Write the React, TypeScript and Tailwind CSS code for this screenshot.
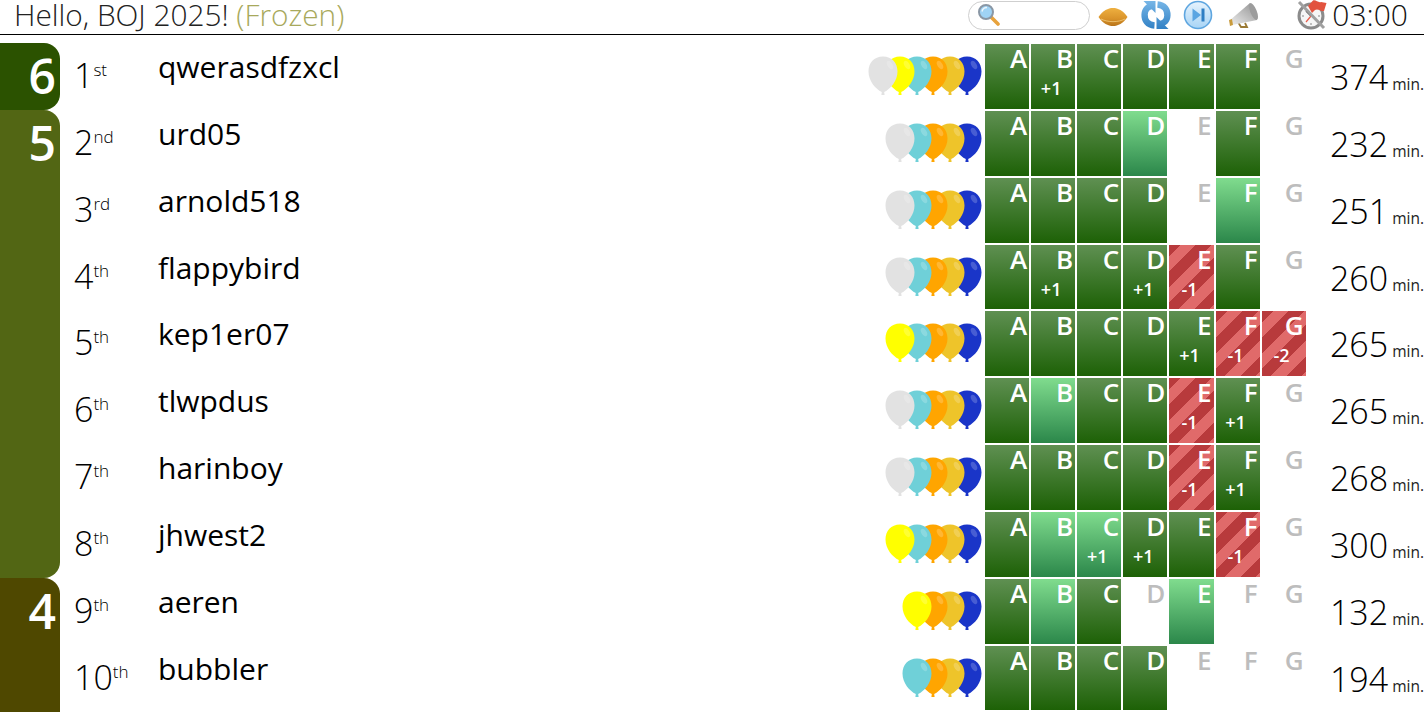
const problems = ["A", "B", "C", "D", "E", "F", "G"];

type Row = {
  rank: number;
  suffix: string;
  name: string;
  balloons: string[];
  cells: string[];
  time: number;
};

// ok / first / no, wrong is "x", delta after the colon
const groups: { solved: number; bg: string; rows: Row[] }[] = [
  {
    solved: 6,
    bg: "bg-[#2b5200]",
    rows: [
      { rank: 1, suffix: "st", name: "qwerasdfzxcl", balloons: ["silver", "yellow", "teal", "orange", "gold", "blue"], cells: ["ok", "ok:+1", "ok", "ok", "ok", "ok", "no"], time: 374 },
    ],
  },
  {
    solved: 5,
    bg: "bg-[#526614]",
    rows: [
      { rank: 2, suffix: "nd", name: "urd05", balloons: ["silver", "teal", "orange", "gold", "blue"], cells: ["ok", "ok", "ok", "first", "no", "ok", "no"], time: 232 },
      { rank: 3, suffix: "rd", name: "arnold518", balloons: ["silver", "teal", "orange", "gold", "blue"], cells: ["ok", "ok", "ok", "ok", "no", "first", "no"], time: 251 },
      { rank: 4, suffix: "th", name: "flappybird", balloons: ["silver", "teal", "orange", "gold", "blue"], cells: ["ok", "ok:+1", "ok", "ok:+1", "x:-1", "ok", "no"], time: 260 },
      { rank: 5, suffix: "th", name: "kep1er07", balloons: ["yellow", "teal", "orange", "gold", "blue"], cells: ["ok", "ok", "ok", "ok", "ok:+1", "x:-1", "x:-2"], time: 265 },
      { rank: 6, suffix: "th", name: "tlwpdus", balloons: ["silver", "teal", "orange", "gold", "blue"], cells: ["ok", "first", "ok", "ok", "x:-1", "ok:+1", "no"], time: 265 },
      { rank: 7, suffix: "th", name: "harinboy", balloons: ["silver", "teal", "orange", "gold", "blue"], cells: ["ok", "ok", "ok", "ok", "x:-1", "ok:+1", "no"], time: 268 },
      { rank: 8, suffix: "th", name: "jhwest2", balloons: ["yellow", "teal", "orange", "gold", "blue"], cells: ["ok", "first", "first:+1", "ok:+1", "ok", "x:-1", "no"], time: 300 },
    ],
  },
  {
    solved: 4,
    bg: "bg-[#4f4800]",
    rows: [
      { rank: 9, suffix: "th", name: "aeren", balloons: ["yellow", "orange", "gold", "blue"], cells: ["ok", "first", "ok", "no", "first", "no", "no"], time: 132 },
      { rank: 10, suffix: "th", name: "bubbler", balloons: ["teal", "orange", "gold", "blue"], cells: ["ok", "ok", "ok", "ok", "no", "no", "no"], time: 194 },
    ],
  },
];

const balloonColors: Record<string, string> = {
  silver: "#e2e2e2",
  yellow: "#ffff00",
  teal: "#6fd0d8",
  orange: "#ffa500",
  gold: "#eec42a",
  blue: "#1a35c8",
};

const Balloon = ({ color, z }: { color: string; z: number }) => (
  <svg width="30" height="40" viewBox="0 0 30 40" className="relative -ml-[13.2px] first:ml-0 shrink-0" style={{ zIndex: z }}>
    <path
      d="M15 0.5C24 0.5 29.5 7 29.5 15.5C29.5 25 22.5 33 16.2 36L16.6 39H13.4L13.8 36C7.5 33 0.5 25 0.5 15.5C0.5 7 6 0.5 15 0.5Z"
      fill={balloonColors[color]}
    />
    <ellipse cx="22" cy="9" rx="2.6" ry="4.5" fill="#fff" opacity="0.2" transform="rotate(-30 22 9)" />
  </svg>
);

const Cell = ({ letter, value }: { letter: string; value: string }) => {
  const [status, delta] = value.split(":");
  const bg =
    status === "ok"
      ? "bg-[linear-gradient(#5f9052,#1d6106)]"
      : status === "first"
        ? "bg-[linear-gradient(#80dc8e,#2b874a)]"
        : status === "x"
          ? "bg-[repeating-linear-gradient(135deg,#b83a3c_0,#b83a3c_8px,#e06a6a_8px,#e06a6a_19px,#b83a3c_19px,#b83a3c_22px)]"
          : "";
  return (
    <div className={`w-[44.1px] h-full shrink-0 flex flex-col items-end pr-[2px] ${bg}`}>
      <span className={`text-[26px] leading-none font-semibold mt-[1px] ${status === "no" ? "text-[#bdbdbd]" : "text-white"}`}>
        {letter}
      </span>
      {delta && <span className="self-start w-[40px] text-center mt-[5px] text-[18px] leading-[24px] font-semibold text-white">{delta}</span>}
    </div>
  );
};

const Standing = ({ row }: { row: Row }) => (
  <div className="flex h-[66.85px]">
    <div className="w-[98px] shrink-0 pl-[14px] pt-[6px] text-[34px] leading-[42px] font-light text-black whitespace-nowrap">
      {row.rank}
      <span className="text-[17px] align-[12px]">{row.suffix}</span>
    </div>
    <div className="flex-1 pt-[5px] text-[30px] leading-[38px] text-black">{row.name}</div>
    <div className="flex items-start pt-[13px] mr-[3px]">
      {row.balloons.map((b, i) => (
        <Balloon key={b} color={b} z={row.balloons.length - i} />
      ))}
    </div>
    <div className="flex gap-[2px] py-[1px]">
      {problems.map((p, i) => (
        <Cell key={p} letter={p} value={row.cells[i]} />
      ))}
    </div>
    <div className="w-[118.3px] shrink-0 pt-[13px] text-right text-[34px] leading-[42px] font-light text-black whitespace-nowrap">
      {row.time}
      <span className="text-[15.5px] font-normal text-[#222] ml-[4px]">min.</span>
    </div>
  </div>
);

const Magnifier = () => (
  <svg width="22" height="22" viewBox="0 0 22 22">
    <path d="M13 13L20 20" stroke="#e8a33d" strokeWidth="3.6" strokeLinecap="round" />
    <circle cx="8" cy="8" r="7" fill="#9fd3f5" stroke="#8a97a5" strokeWidth="2" />
    <path d="M4 7.5C4.5 5 6.5 3.5 9 3.5" fill="none" stroke="#fff" strokeWidth="1.4" opacity="0.8" />
  </svg>
);

const Lemon = () => (
  <svg width="30" height="20" viewBox="0 0 30 20" className="mt-[3px]">
    <defs>
      <linearGradient id="lemon" x1="0" y1="0" x2="0" y2="1">
        <stop offset="0" stopColor="#eeb040" />
        <stop offset="0.6" stopColor="#d9932a" />
        <stop offset="1" stopColor="#b8741a" />
      </linearGradient>
    </defs>
    <path d="M0.5 10C5 3.5 10 1 15 1C20 1 25 3.5 29.5 10C25 16.5 20 19 15 19C10 19 5 16.5 0.5 10Z" fill="url(#lemon)" />
    <path d="M3 12C10 15.5 20 15.5 27 12" fill="none" stroke="#f6d48a" strokeWidth="1" opacity="0.7" />
  </svg>
);

const Refresh = () => (
  <svg width="30" height="30" viewBox="0 0 30 30">
    <defs>
      <linearGradient id="refresh" gradientUnits="userSpaceOnUse" x1="0" y1="0" x2="0" y2="30">
        <stop offset="0" stopColor="#7ab8e8" />
        <stop offset="1" stopColor="#2f7fc4" />
      </linearGradient>
    </defs>
    <path d="M13.5 25.5C6.5 25 3.4 20 3.6 14.5C3.8 9.5 7 6.2 12 5.8" fill="none" stroke="url(#refresh)" strokeWidth="6.4" />
    <path d="M2.5 1H14.5V13Z" fill="url(#refresh)" />
    <path d="M16.5 4.5C23.5 5 26.6 10 26.4 15.5C26.2 20.5 23 23.8 18 24.2" fill="none" stroke="url(#refresh)" strokeWidth="6.4" />
    <path d="M27.5 29H15.5V17Z" fill="url(#refresh)" />
  </svg>
);

const SkipButton = () => (
  <svg width="30" height="30" viewBox="0 0 30 30">
    <defs>
      <linearGradient id="skip" x1="0" y1="0" x2="0" y2="1">
        <stop offset="0" stopColor="#e6f3fd" />
        <stop offset="1" stopColor="#a8d4f5" />
      </linearGradient>
    </defs>
    <circle cx="15" cy="15" r="13.5" fill="url(#skip)" stroke="#5ea6e0" strokeWidth="1.6" />
    <path d="M9.5 8.5L18 15L9.5 21.5Z" fill="#5aa5e2" />
    <rect x="18.5" y="8.5" width="3" height="13" fill="#2f7fc4" />
  </svg>
);

const Megaphone = () => (
  <svg width="30" height="30" viewBox="0 0 30 30">
    <defs>
      <linearGradient id="mega" x1="0" y1="1" x2="1" y2="0">
        <stop offset="0" stopColor="#f0f0f0" />
        <stop offset="1" stopColor="#8f8f8f" />
      </linearGradient>
    </defs>
    <path d="M10 22L13 27H19L17 23" fill="none" stroke="#9a7a35" strokeWidth="1.8" />
    <path d="M1 21L22 3L29 20L4 25Z" fill="url(#mega)" />
    <path d="M1 20L4 19L5 25L2 26Z" fill="#c99b3c" />
    <ellipse cx="25.5" cy="11.5" rx="3.2" ry="9" fill="#9c9c9c" transform="rotate(-22 25.5 11.5)" />
  </svg>
);

const AlarmClock = () => (
  <svg width="30" height="30" viewBox="0 0 30 30">
    <circle cx="14" cy="16" r="12" fill="#f6f6f6" stroke="#8b8b8b" strokeWidth="3" />
    <path d="M14 7V9M14 23V25M5 16H7M21 16H23" stroke="#888" strokeWidth="1" />
    <path d="M14 16L9 11" stroke="#222" strokeWidth="1.3" />
    <path d="M14 16L9 22" stroke="#e85b4a" strokeWidth="1.2" />
    <path d="M2 2L27 28" stroke="#a0a0a0" strokeWidth="3" />
    <path d="M11 6L16 0.5C19 -0.5 21 3 24 2L29.5 3L27 11C24 12 21 8 18 10L15 13Z" fill="#e2533f" />
  </svg>
);

export default function App() {
  return (
    <div className="h-[712px] w-full overflow-hidden bg-white font-['Open_Sans',sans-serif]">
      <header className="flex items-start justify-between h-[35px] border-b border-black">
        <h1 className="pl-[14px] text-[29.8px] leading-[30px] font-light text-[#222]">
          Hello, BOJ 2025! <span className="text-[#a8a95c]">(Frozen)</span>
        </h1>
        <div className="flex items-center h-[30px] pr-[16px]">
          <div className="w-[122px] h-[29px] rounded-full border border-[#cfcfcf] pl-[9px] flex items-center">
            <Magnifier />
          </div>
          <div className="ml-[8px]">
            <Lemon />
          </div>
          <div className="ml-[13px]">
            <Refresh />
          </div>
          <div className="ml-[12px]">
            <SkipButton />
          </div>
          <div className="ml-[15px]">
            <Megaphone />
          </div>
          <div className="ml-[39px]">
            <AlarmClock />
          </div>
          <span className="ml-[5px] text-[30px] leading-[30px] font-light text-[#111]">03:00</span>
        </div>
      </header>
      <div className="mt-[8px]">
        {groups.map((g) => (
          <div key={g.solved} className="group flex">
            <div className={`w-[60px] shrink-0 rounded-r-[16px] pr-[4px] pt-[4px] text-right text-[48px] leading-[58px] font-semibold text-white ${g.bg}`}>
              {g.solved}
            </div>
            <div className="flex-1 group-last:pb-[20px]">
              {g.rows.map((r) => (
                <Standing key={r.rank} row={r} />
              ))}
            </div>
          </div>
        ))}
      </div>
    </div>
  );
}
